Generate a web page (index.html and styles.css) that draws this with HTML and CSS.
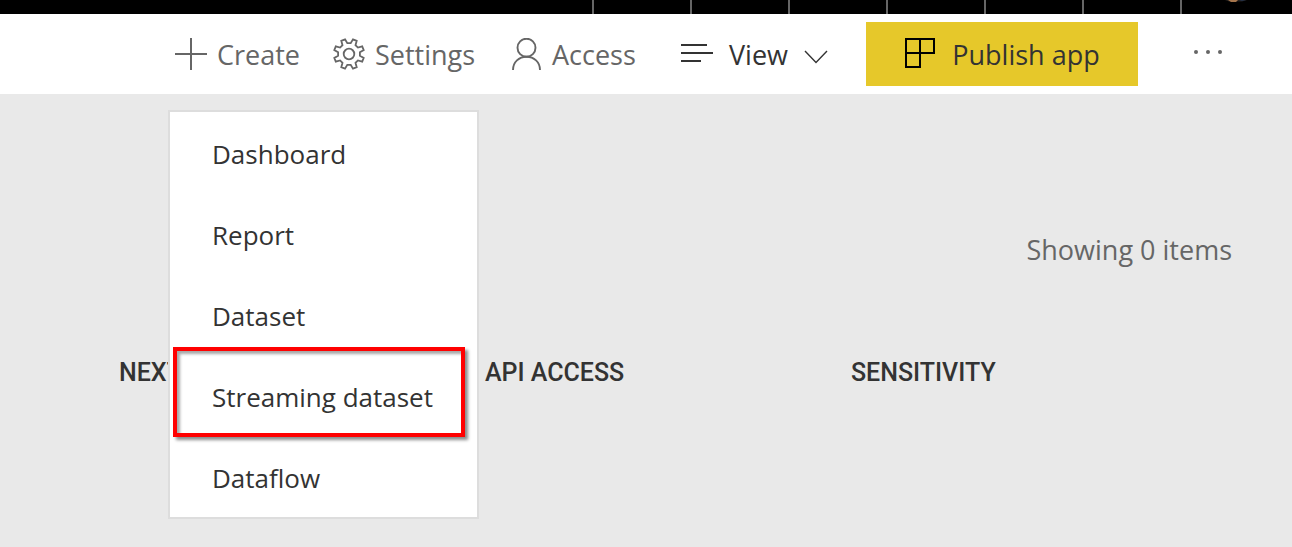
FILE: index.html
```html
<!DOCTYPE html>
<html lang="en">
<head>
<meta charset="utf-8">
<title>Workspace</title>
<link rel="stylesheet" href="styles.css">
</head>
<body>
<header class="topbar">
  <span class="slot"></span><span class="slot"></span><span class="slot"></span><span class="slot"></span><span class="slot"></span><span class="slot"></span>
  <span class="slot account">
    <svg class="avatar" viewBox="0 0 24 4" aria-hidden="true"><path d="M1 0h22l-5 1.500h-13z" fill="#25211f"/><path d="M4 0h10l-2 2h-5z" fill="#a5754c"/><path d="M15 0h7l-4 1z" fill="#23324c"/></svg>
  </span>
</header>
<nav class="toolbar">
  <div class="create">
    <button class="tool" type="button">
      <svg class="icon" viewBox="0 0 32 32" aria-hidden="true"><path d="M16 0v32M0 16h32" stroke-width="2"/></svg>
      <span class="label">Create</span>
    </button>
    <ul class="menu">
      <li><button class="item" type="button">Dashboard</button></li>
      <li><button class="item" type="button">Report</button></li>
      <li><button class="item" type="button">Dataset</button></li>
      <li><button class="item marked" type="button">Streaming dataset</button></li>
      <li><button class="item" type="button">Dataflow</button></li>
    </ul>
  </div>
  <button class="tool" type="button">
    <svg class="icon" viewBox="0 0 32 32" aria-hidden="true"><g stroke-width="1.800"><path d="M12 1.300 14.300 5.200H17.700L20 1.300 23.700 2.800 22.500 7.200 24.900 9.600 29.200 8.400 30.700 12.100 26.900 14.300V17.700L30.700 19.900 29.200 23.600 24.900 22.400 22.500 24.800 23.700 29.200 20 30.700 17.700 26.900H14.300L12 30.700 8.300 29.200 9.500 24.800 7.100 22.400 2.800 23.600 1.300 19.900 5.100 17.700V14.300L1.300 12.100 2.800 8.400 7.100 9.600 9.500 7.200 8.300 2.800Z"/><circle cx="16" cy="16" r="5.300"/></g></svg>
    <span class="label">Settings</span>
  </button>
  <button class="tool access" type="button">
    <svg class="icon person" viewBox="0 0 30 32" aria-hidden="true"><g stroke-width="1.900"><circle cx="14.500" cy="9.700" r="9"/><path d="M1 32C1 24 7 18.800 14.500 18.800S28 24 28 32"/></g></svg>
    <span class="label">Access</span>
  </button>
  <button class="tool view" type="button">
    <svg class="icon" viewBox="0 0 32 32" aria-hidden="true"><path d="M0 7h26M0 15h32M0 23h20" stroke-width="2"/></svg>
    <span class="label">View</span>
    <svg class="chevron" viewBox="0 0 24 20" aria-hidden="true"><path d="M1 7 12 18.500 23 7" stroke-width="1.400"/></svg>
  </button>
  <button class="publish" type="button">
    <svg class="icon" viewBox="0 0 32 32" aria-hidden="true"><path d="M2 1H30V15H2ZM2 15V29H16V1" stroke-width="2"/></svg>
    <span class="label">Publish app</span>
  </button>
  <button class="more" type="button" aria-label="More options">
    <svg class="dots" viewBox="0 0 32 8" aria-hidden="true"><circle cx="4" cy="2" r="2"/><circle cx="16" cy="2" r="2"/><circle cx="28" cy="2" r="2"/></svg>
  </button>
</nav>
<main class="content">
  <p class="count">Showing 0 items</p>
  <table class="list">
    <thead>
      <tr><th scope="col">NEXT</th><th scope="col">API ACCESS</th><th scope="col">SENSITIVITY</th></tr>
    </thead>
  </table>
</main>
</body>
</html>
```
FILE: styles.css
```css
* {
  box-sizing: border-box;
}

body {
  margin: 0;
  min-height: 100vh;
  display: flex;
  flex-direction: column;
  background: #e9e9e9;
  color: #333;
  font-family: "Open Sans", "Noto Sans", sans-serif;
  font-size: 27px;
  line-height: 36px;
}

button {
  margin: 0;
  padding: 0;
  border: 0;
  background: none;
  color: inherit;
  font: inherit;
  cursor: pointer;
  white-space: nowrap;
}

svg {
  display: block;
  flex: none;
  fill: none;
  stroke: currentColor;
}

.topbar {
  height: 14px;
  display: flex;
  justify-content: flex-end;
  background: #000;
}

.slot {
  width: 98px;
  border-left: 2px solid #666;
}

.account {
  width: 112px;
  padding-left: 42px;
}

.avatar {
  width: 24px;
  height: 4px;
  stroke: none;
}

.toolbar {
  height: 80px;
  display: grid;
  grid-template-columns: 158px 179px 169px 185px 272px 154px;
  justify-content: end;
  align-items: center;
  background: #fff;
  color: #666;
}

.create {
  position: relative;
}

.tool {
  display: flex;
  align-items: center;
  gap: 10px;
}

.label {
  padding-top: 2px;
}

.icon {
  width: 32px;
  height: 32px;
}

.person {
  width: 30px;
}

.view {
  gap: 16px;
  color: #333;
}

.chevron {
  width: 24px;
  height: 20px;
}

.publish {
  height: 64px;
  display: flex;
  align-items: center;
  justify-content: center;
  gap: 16px;
  background: #e6c82a;
  color: #333;
}

.publish svg {
  color: #000;
}

.more {
  padding-left: 54px;
}

.dots {
  width: 32px;
  height: 8px;
  fill: #666;
  stroke: none;
}

.menu {
  position: absolute;
  top: 75px;
  left: -7px;
  z-index: 1;
  width: 311px;
  margin: 0;
  padding: 0;
  list-style: none;
  border: 2px solid #ddd;
  background: #fff;
  color: #333;
  font-size: 26px;
}

.item {
  display: block;
  width: 100%;
  height: 81px;
  padding: 3px 0 0 42px;
  text-align: left;
}

.marked {
  position: relative;
}

.marked::after {
  content: "";
  position: absolute;
  inset: -8px 12px -1px 3px;
  border: 4px solid #f00;
  box-shadow: 3px 3px 3px rgba(0, 0, 0, 0.45), inset 3px 3px 3px rgba(0, 0, 0, 0.35);
}

.content {
  flex: 1;
  padding: 138px 0 0 119px;
}

.count {
  margin: 0 60px 87px 0;
  text-align: right;
  color: #666;
}

.list {
  width: 100%;
  table-layout: fixed;
  border-collapse: collapse;
}

.list th {
  width: 31.2%;
  padding: 0;
  text-align: left;
  font: 500 25px/36px Roboto, sans-serif;
}

.list th:last-child {
  width: 37.6%;
}
```
